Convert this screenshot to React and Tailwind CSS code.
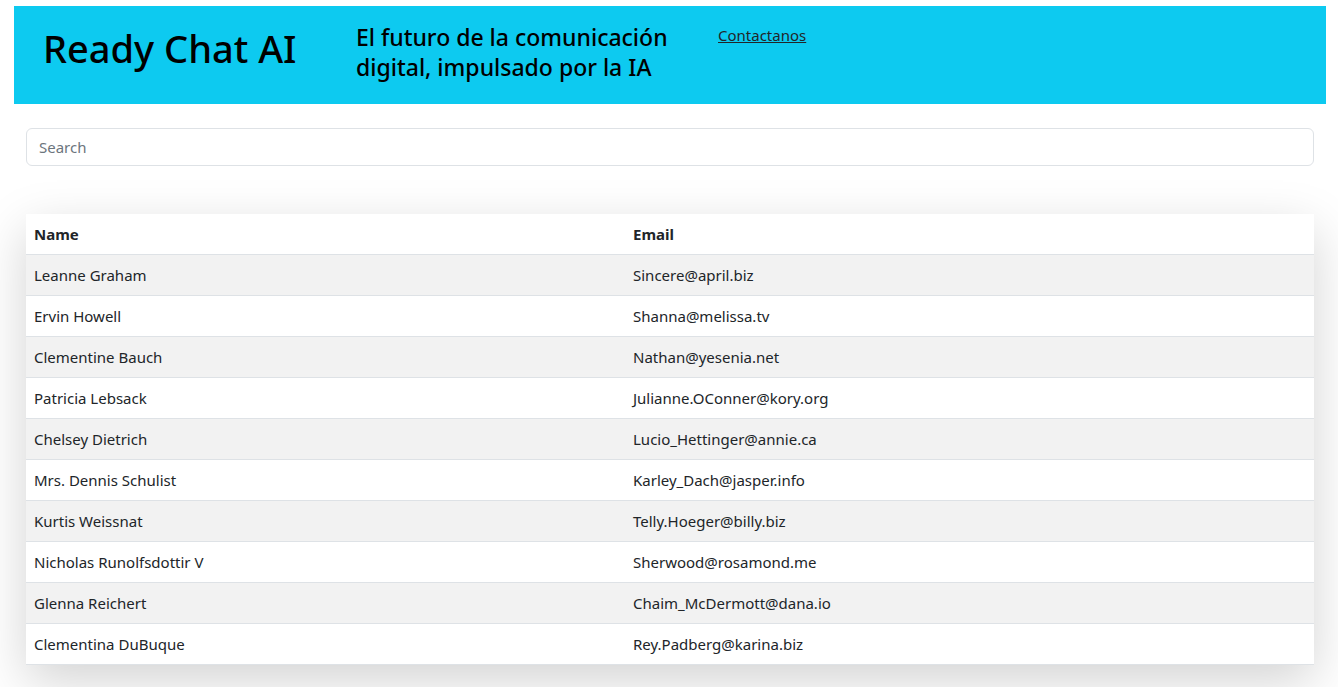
const users = [
  { name: "Leanne Graham", email: "Sincere@april.biz" },
  { name: "Ervin Howell", email: "Shanna@melissa.tv" },
  { name: "Clementine Bauch", email: "Nathan@yesenia.net" },
  { name: "Patricia Lebsack", email: "Julianne.OConner@kory.org" },
  { name: "Chelsey Dietrich", email: "Lucio_Hettinger@annie.ca" },
  { name: "Mrs. Dennis Schulist", email: "Karley_Dach@jasper.info" },
  { name: "Kurtis Weissnat", email: "Telly.Hoeger@billy.biz" },
  { name: "Nicholas Runolfsdottir V", email: "Sherwood@rosamond.me" },
  { name: "Glenna Reichert", email: "Chaim_McDermott@dana.io" },
  { name: "Clementina DuBuque", email: "Rey.Padberg@karina.biz" },
];

export default function App() {
  return (
    <div className="min-h-screen bg-white text-[#212529] font-['Noto_Sans',sans-serif] pt-[6px]">
      <header className="ml-[14px] mr-[12px] h-[98px] bg-[#0dcaf0] flex items-start pl-[29px] text-black">
        <h1 className="w-[313px] pt-[18px] text-[38px] leading-[48px] font-medium">Ready Chat AI</h1>
        <p className="w-[362px] pt-[16px] text-[23px] leading-[30px] font-medium whitespace-nowrap">
          El futuro de la comunicación
          <br />
          digital, impulsado por la IA
        </p>
        <a href="#" className="pt-[17px] text-[15px] leading-6 underline text-[#212529]">
          Contactanos
        </a>
      </header>

      <div className="ml-[26px] mr-[24px] mt-[24px]">
        <input
          type="text"
          placeholder="Search"
          className="w-full h-[38px] px-3 rounded-md border border-[#dee2e6] text-[15px] outline-none placeholder:text-[#6c757d]"
        />
      </div>

      <div className="ml-[26px] mr-[24px] mt-[48px] shadow-[0_16px_48px_rgba(0,0,0,0.175)] bg-white">
        <table className="w-full border-collapse text-[15px]">
          <thead>
            <tr className="border-b border-[#dee2e6]">
              <th className="w-[599px] text-left font-bold px-2 py-2 leading-6">Name</th>
              <th className="text-left font-bold px-2 py-2 leading-6">Email</th>
            </tr>
          </thead>
          <tbody>
            {users.map((u, i) => (
              <tr
                key={u.email}
                className={`border-b border-[#dee2e6] ${i % 2 === 0 ? "bg-[#f2f2f2]" : "bg-white"}`}
              >
                <td className="px-2 py-2 leading-6">{u.name}</td>
                <td className="px-2 py-2 leading-6">{u.email}</td>
              </tr>
            ))}
          </tbody>
        </table>
      </div>
    </div>
  );
}
